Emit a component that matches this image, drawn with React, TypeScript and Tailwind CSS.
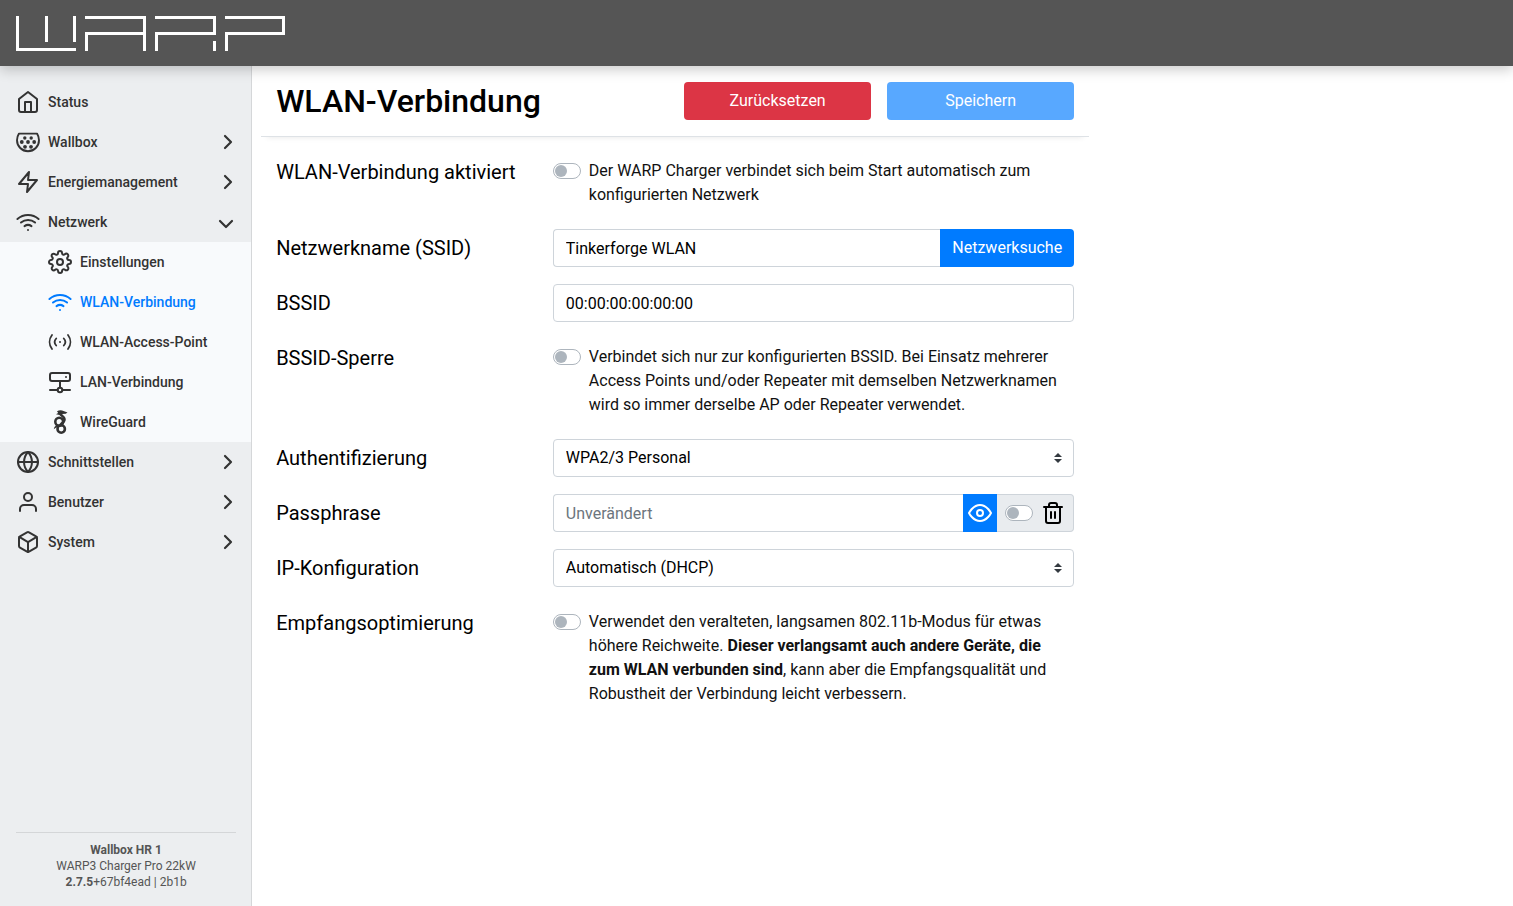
import React from "react";
import type { ReactNode } from "react";
import { FiBox, FiEye, FiGlobe, FiHome, FiSettings, FiTrash2, FiUser, FiWifi, FiZap } from "react-icons/fi";

function Logo() {
  return (
    <svg width="269" height="35" viewBox="0 0 269 35" fill="#fff" shapeRendering="crispEdges" role="img" aria-label="WARP">
      <path d="M0 0h3v32h57v3H0zM29 0h3v26h-3zM57 0h3v26h-3z" />
      <path d="M69 0h61v35h-3V19H72v16h-3V16h58V3H69z" />
      <path d="M139 0h61v19h-58v16h-3V16h58V3h-58zM197 25h3v10h-3z" />
      <path d="M209 0h60v19h-57v16h-3V16h57V3h-57z" />
    </svg>
  );
}

function IconFrame({ children }: { children: ReactNode }) {
  return (
    <svg width="24" height="24" viewBox="0 0 24 24" fill="none" stroke="currentColor" strokeWidth="2" strokeLinecap="round" strokeLinejoin="round" aria-hidden="true">
      {children}
    </svg>
  );
}

function PlugIcon() {
  return (
    <IconFrame>
      <path d="M3 3.600h18c1.400 2.200 2 4.400 2 6.600a11 11 0 0 1-22 0c0-2.200.6-4.400 2-6.600z" strokeWidth="1.900" />
      <g fill="currentColor" stroke="none">
        <circle cx="8.800" cy="8" r="1.700" />
        <circle cx="15.200" cy="8" r="1.700" />
        <circle cx="5.800" cy="12" r="1.900" />
        <circle cx="12" cy="12" r="1.900" />
        <circle cx="18.200" cy="12" r="1.900" />
        <circle cx="9" cy="16.800" r="1.900" />
        <circle cx="15" cy="16.800" r="1.900" />
      </g>
    </IconFrame>
  );
}

function AccessPointIcon() {
  return (
    <IconFrame>
      <path d="M4 5c-3.200 4.200-3.200 9.800 0 14M20 5c3.200 4.200 3.200 9.800 0 14M8.200 8.500c-2 2.200-2 4.800 0 7M15.800 8.500c2 2.200 2 4.800 0 7" strokeWidth="1.800" />
      <path d="M12 12h.01" />
    </IconFrame>
  );
}

function LanIcon() {
  return (
    <IconFrame>
      <rect x="2" y="3" width="20" height="8" rx="2" />
      <path d="M18 7h.01M12 11v6.500M2 20h7.500M14.500 20H22" />
      <circle cx="12" cy="20" r="2.300" />
    </IconFrame>
  );
}

function DragonIcon() {
  return (
    <IconFrame>
      <path d="M9 1.200C11 .2 13.500.1 15.500.9l4 1.600-1.800 1.200-3.700.4-2.500 1L8 4.300l2.200-1.400z" fill="currentColor" stroke="none" />
      <path d="M12.500 4c.2 1.500 3.800 2.300 4 5.200.1 2.100-1.500 3.600-3.500 4.800" strokeWidth="2.600" />
      <circle cx="11.200" cy="11.700" r="3.900" strokeWidth="2.600" />
      <circle cx="13.200" cy="19" r="3.700" strokeWidth="2.600" />
      <path d="M5.800 19.300c.2-2.300 1.500-3.700 4-4.300l1.400 1.800c-2 .2-3.600.9-5.400 2.500z" fill="currentColor" stroke="none" />
    </IconFrame>
  );
}

type Item = { label: string; icon: ReactNode; arrow?: "right" | "down"; active?: boolean };

const topItems: Item[] = [
  { label: "Status", icon: <FiHome size={24} /> },
  { label: "Wallbox", icon: <PlugIcon />, arrow: "right" },
  { label: "Energiemanagement", icon: <FiZap size={24} />, arrow: "right" },
  { label: "Netzwerk", icon: <FiWifi size={24} />, arrow: "down" },
];

const networkItems: Item[] = [
  { label: "Einstellungen", icon: <FiSettings size={24} /> },
  { label: "WLAN-Verbindung", icon: <FiWifi size={24} />, active: true },
  { label: "WLAN-Access-Point", icon: <AccessPointIcon /> },
  { label: "LAN-Verbindung", icon: <LanIcon /> },
  { label: "WireGuard", icon: <DragonIcon /> },
];

const bottomItems: Item[] = [
  { label: "Schnittstellen", icon: <FiGlobe size={24} />, arrow: "right" },
  { label: "Benutzer", icon: <FiUser size={24} />, arrow: "right" },
  { label: "System", icon: <FiBox size={24} />, arrow: "right" },
];

function NavItem({ item, nested }: { item: Item; nested?: boolean }) {
  return (
    <li>
      <a
        href="#"
        aria-current={item.active ? "page" : undefined}
        className={`flex h-10 items-center gap-2 pr-[11px] text-sm font-medium ${nested ? "pl-12" : "pl-4"} ${item.active ? "text-[#007bff]" : "text-[#333]"}`}
      >
        {item.icon}
        <span className="flex-1">{item.label}</span>
        {item.arrow && (
          <IconFrame>
            <path d={item.arrow === "down" ? "M4 11l6 6 6-6" : "M9 6l6 6-6 6"} strokeWidth="2.200" />
          </IconFrame>
        )}
      </a>
    </li>
  );
}

function Switch({ id, label }: { id: string; label?: string }) {
  return (
    <input
      id={id}
      type="checkbox"
      role="switch"
      aria-label={label}
      className="h-4 w-7 shrink-0 appearance-none rounded-full border border-[#adb5bd] bg-white p-px before:block before:size-3 before:rounded-full before:bg-[#adb5bd] checked:border-[#007bff] checked:bg-[#007bff] checked:before:translate-x-3 checked:before:bg-white"
    />
  );
}

function Row({ label, htmlFor, children }: { label: string; htmlFor: string; children: ReactNode }) {
  return (
    <div className="grid grid-cols-3 gap-x-8">
      <label htmlFor={htmlFor} className="pt-1 text-xl leading-[30px]">
        {label}
      </label>
      <div className="col-span-2">{children}</div>
    </div>
  );
}

function SwitchRow({ label, id, children }: { label: string; id: string; children: ReactNode }) {
  return (
    <Row label={label} htmlFor={id}>
      <div className="flex gap-2 pt-[6px] pb-[5px]">
        <span className="flex h-6 items-center">
          <Switch id={id} />
        </span>
        <label htmlFor={id} className="text-[#111]">
          {children}
        </label>
      </div>
    </Row>
  );
}

function Select({ id, options }: { id: string; options: string[] }) {
  return (
    <div className="relative">
      <select id={id} className="h-[38px] w-full appearance-none rounded border border-[#ced4da] bg-white pr-8 pl-3">
        {options.map((o) => (
          <option key={o}>{o}</option>
        ))}
      </select>
      <svg className="pointer-events-none absolute top-[14px] right-3" width="8" height="10" viewBox="0 0 4 5" fill="#343a40" aria-hidden="true">
        <path d="M2 0L0 2h4zm0 5L0 3h4z" />
      </svg>
    </div>
  );
}

export default function App() {
  return (
    <div className="flex min-h-screen flex-col bg-white font-[Roboto,'Liberation_Sans',sans-serif] text-base text-black">
      <header className="relative z-10 flex h-[66px] items-center bg-[#555] px-4 shadow-[0_4px_12px_rgba(0,0,0,0.2)]">
        <a href="#">
          <Logo />
        </a>
      </header>
      <div className="flex flex-1">
        <nav className="flex w-1/6 shrink-0 flex-col justify-between border-r border-[#d5d7d9] bg-[#eceef0] pt-4">
          <ul>
            {topItems.map((i) => (
              <NavItem key={i.label} item={i} />
            ))}
            <li className="bg-[#f8fafc]">
              <ul>
                {networkItems.map((i) => (
                  <NavItem key={i.label} item={i} nested />
                ))}
              </ul>
            </li>
            {bottomItems.map((i) => (
              <NavItem key={i.label} item={i} />
            ))}
          </ul>
          <div className="mr-[15px] ml-4 border-t border-[#d4d6d8] pt-[9px] pb-4 text-center text-xs leading-4 text-[#555]">
            <p className="font-bold">Wallbox HR 1</p>
            <p>WARP3 Charger Pro 22kW</p>
            <p>
              <b>2.7.5</b>+67bf4ead | 2b1b
            </p>
          </div>
        </nav>
        <main className="min-w-0 flex-1 px-6">
          <div className="max-w-[798px]">
            <div className="-mx-[15px] flex items-center justify-between border-b border-[#dee2e6] px-[15px] py-4 shadow-[0_6px_6px_-6px_rgba(0,0,0,0.1)]">
              <h1 className="text-[32px] leading-[38px] font-medium">WLAN-Verbindung</h1>
              <div className="grid grid-cols-2 gap-4">
                <button type="button" className="h-[38px] w-[187px] rounded bg-[#dc3545] text-white">
                  Zurücksetzen
                </button>
                <button type="submit" form="wifi" disabled className="h-[38px] w-[187px] rounded bg-[#007bff] text-white opacity-65">
                  Speichern
                </button>
              </div>
            </div>
            <form id="wifi" className="flex flex-col gap-[17px] py-4">
              <SwitchRow label="WLAN-Verbindung aktiviert" id="enabled">
                Der WARP Charger verbindet sich beim Start automatisch zum konfigurierten Netzwerk
              </SwitchRow>
              <Row label="Netzwerkname (SSID)" htmlFor="ssid">
                <div className="flex">
                  <input id="ssid" type="text" defaultValue="Tinkerforge WLAN" className="h-[38px] min-w-0 flex-1 rounded-l border border-r-0 border-[#ced4da] px-3" />
                  <button type="button" className="rounded-r bg-[#007bff] px-3 text-white">
                    Netzwerksuche
                  </button>
                </div>
              </Row>
              <Row label="BSSID" htmlFor="bssid">
                <input id="bssid" type="text" defaultValue="00:00:00:00:00:00" className="block h-[38px] w-full rounded border border-[#ced4da] px-3" />
              </Row>
              <SwitchRow label="BSSID-Sperre" id="bssid-lock">
                Verbindet sich nur zur konfigurierten BSSID. Bei Einsatz mehrerer Access Points und/oder Repeater mit demselben Netzwerknamen wird so immer derselbe AP oder Repeater verwendet.
              </SwitchRow>
              <Row label="Authentifizierung" htmlFor="auth">
                <Select id="auth" options={["WPA2/3 Personal"]} />
              </Row>
              <Row label="Passphrase" htmlFor="passphrase">
                <div className="flex">
                  <input id="passphrase" type="password" placeholder="Unverändert" className="h-[38px] min-w-0 flex-1 rounded-l border border-r-0 border-[#ced4da] px-3 placeholder:text-[#6c757d]" />
                  <button type="button" aria-label="Passphrase anzeigen" className="flex w-[34px] items-center justify-center bg-[#007bff] text-white">
                    <FiEye size={24} />
                  </button>
                  <div className="flex items-center gap-2 rounded-r border border-l-0 border-[#ced4da] bg-[#e9ecef] px-2">
                    <Switch id="clear-passphrase" label="Passphrase löschen" />
                    <FiTrash2 size={24} />
                  </div>
                </div>
              </Row>
              <Row label="IP-Konfiguration" htmlFor="ip">
                <Select id="ip" options={["Automatisch (DHCP)"]} />
              </Row>
              <SwitchRow label="Empfangsoptimierung" id="reception">
                Verwendet den veralteten, langsamen 802.11b-Modus für etwas höhere Reichweite. <b>Dieser verlangsamt auch andere Geräte, die zum WLAN verbunden sind</b>, kann aber die Empfangsqualität und Robustheit der Verbindung leicht verbessern.
              </SwitchRow>
            </form>
          </div>
        </main>
      </div>
    </div>
  );
}
